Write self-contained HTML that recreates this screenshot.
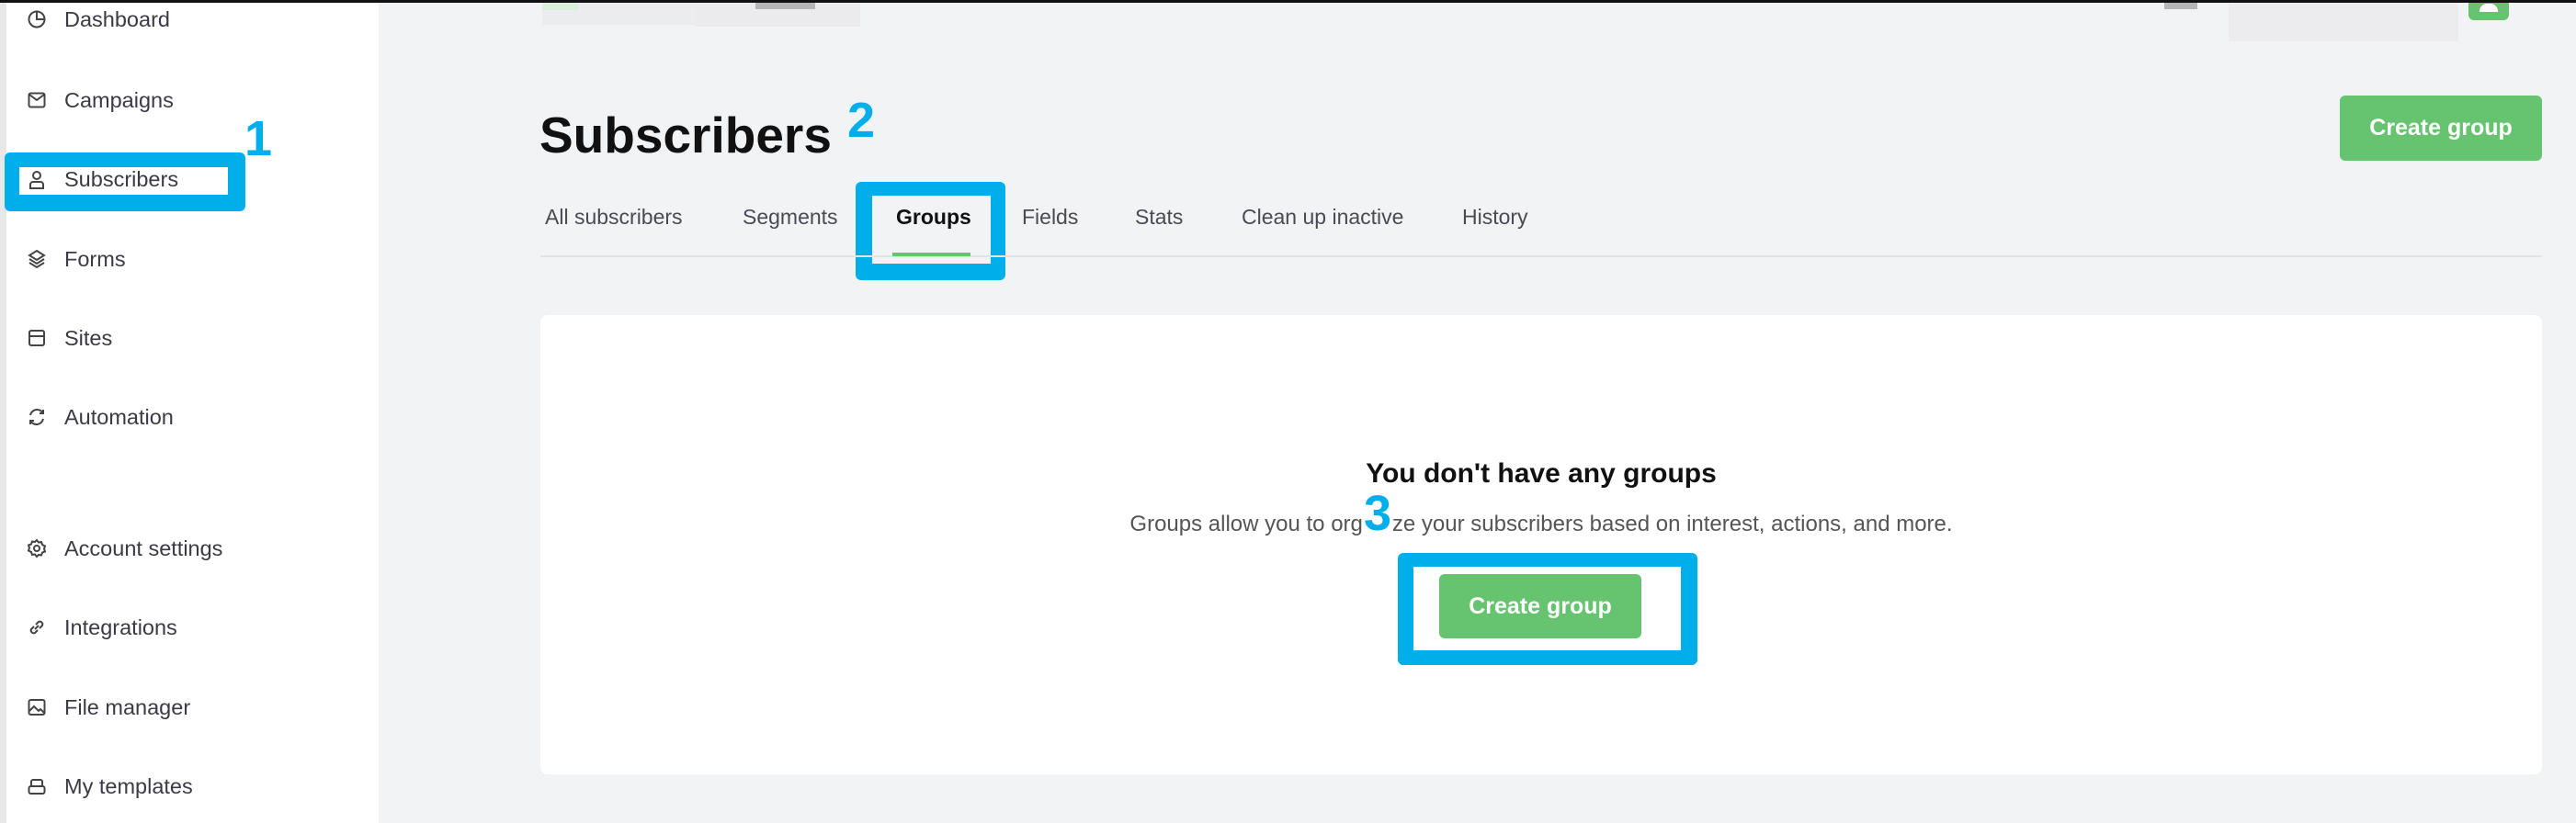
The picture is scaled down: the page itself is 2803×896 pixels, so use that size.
<!DOCTYPE html>
<html><head><meta charset="utf-8"><style>
*{margin:0;padding:0;box-sizing:border-box}
body{width:2803px;height:896px;overflow:hidden;background:#f2f3f5;font-family:"Liberation Sans",sans-serif;position:relative}
.abs{position:absolute}
.side{left:0;top:0;width:412px;height:896px;background:#fff;border-left:7px solid #e8e8e8}
.item{position:absolute;left:70px;font-size:23.5px;color:#3a3a46;line-height:28px}
.ic{position:absolute;left:29px;width:22px;height:22px}
.tab{position:absolute;top:222px;font-size:23px;color:#4a4a55;line-height:28px}
.btn{background:#66c36f;color:#fff;border-radius:6px;font-size:25px;font-weight:bold;display:flex;align-items:center;justify-content:center}
.blue{background:#00aeea;border-radius:6px}
.num{color:#00aeea;font-weight:bold;font-size:54px;line-height:54px}
</style></head><body>
<div class="abs" style="left:0;top:0;width:2803px;height:3px;background:#111;z-index:5"></div>
<div class="abs side"></div>
<div class="abs" style="left:590px;top:3px;width:170px;height:24px;background:#ececee"></div>
<div class="abs" style="left:590px;top:3px;width:40px;height:8px;background:#dcefdc"></div>
<div class="abs" style="left:756px;top:3px;width:180px;height:26px;background:#ebebed"></div>
<div class="abs" style="left:822px;top:3px;width:65px;height:7px;background:#b5b5b8"></div>
<div class="abs" style="left:2355px;top:3px;width:36px;height:7px;background:#b5b5b8"></div>
<div class="abs" style="left:2425px;top:3px;width:250px;height:42px;background:#ececef"></div>
<div class="abs" style="left:2686px;top:0;width:44px;height:22px;background:#66c36f;border-radius:0 0 6px 6px"></div>
<div class="abs" style="left:2698px;top:4px;width:20px;height:9px;background:#fff;border-radius:8px 8px 0 0"></div>

<div class="abs blue" style="left:5px;top:166px;width:262px;height:64px"></div>
<div class="abs" style="left:21px;top:182px;width:227px;height:30px;background:#fff"></div>
<div class="abs num" style="left:266px;top:124px">1</div>

<svg class="ic" style="top:10px" viewBox="0 0 22 22" fill="none" stroke="#444" stroke-width="2"><circle cx="11" cy="11" r="8.5"/><path d="M11 2.5V11H19.5"/></svg>
<div class="item" style="top:7px">Dashboard</div>
<svg class="ic" style="top:98px" viewBox="0 0 22 22" fill="none" stroke="#444" stroke-width="2"><rect x="2.5" y="3.5" width="17" height="15" rx="2"/><path d="M3 5l8 6 8-6"/></svg>
<div class="item" style="top:95px">Campaigns</div>
<svg class="ic" style="top:185px" viewBox="0 0 22 22" fill="none" stroke="#444" stroke-width="2"><circle cx="11" cy="6" r="4"/><path d="M4 20v-4a3 3 0 0 1 3-3h8a3 3 0 0 1 3 3v4z"/></svg>
<div class="item" style="top:181px">Subscribers</div>
<svg class="ic" style="top:271px" viewBox="0 0 22 22" fill="none" stroke="#444" stroke-width="2"><path d="M11 2l8 5-8 5-8-5z M3 11l8 5 8-5 M3 15l8 5 8-5"/></svg>
<div class="item" style="top:268px">Forms</div>
<svg class="ic" style="top:357px" viewBox="0 0 22 22" fill="none" stroke="#444" stroke-width="2"><rect x="3" y="3" width="16" height="16" rx="2"/><path d="M3 9h16"/></svg>
<div class="item" style="top:354px">Sites</div>
<svg class="ic" style="top:443px" viewBox="0 0 22 22" fill="none" stroke="#444" stroke-width="2"><path d="M4 9a7.5 7.5 0 0 1 14-2M18 3v4h-4M18 13a7.5 7.5 0 0 1-14 2M4 19v-4h4"/></svg>
<div class="item" style="top:440px">Automation</div>
<svg class="ic" style="top:586px" viewBox="0 0 22 22" fill="none" stroke="#444" stroke-width="2"><circle cx="11" cy="11" r="3"/><path d="M11 2l2 2.5 3-.5 1 3 3 1.5-1 3 1 3-3 1-1 3-3-.5L11 20l-2-2.5-3 .5-1-3-3-1.5 1-3-1-3 3-1 1-3 3 .5z"/></svg>
<div class="item" style="top:583px">Account settings</div>
<svg class="ic" style="top:672px" viewBox="0 0 22 22" fill="none" stroke="#444" stroke-width="2"><path d="M9 13l4-4M8 10l-3 3a3 3 0 0 0 4 4l3-3M14 12l3-3a3 3 0 0 0-4-4l-3 3"/></svg>
<div class="item" style="top:669px">Integrations</div>
<svg class="ic" style="top:759px" viewBox="0 0 22 22" fill="none" stroke="#444" stroke-width="2"><rect x="2.5" y="3" width="17" height="16" rx="2"/><path d="M3 15l5-5 5 5 2-2 4 4"/></svg>
<div class="item" style="top:756px">File manager</div>
<svg class="ic" style="top:845px" viewBox="0 0 22 22" fill="none" stroke="#444" stroke-width="2"><rect x="2.5" y="11" width="17" height="8" rx="2"/><path d="M5 11V6a2 2 0 0 1 2-2h8a2 2 0 0 1 2 2v5"/></svg>
<div class="item" style="top:842px">My templates</div>

<div class="abs" style="left:587px;top:112px;font-size:55px;font-weight:bold;color:#111;line-height:70px">Subscribers</div>
<div class="abs num" style="left:922px;top:104px">2</div>
<div class="abs btn" style="left:2546px;top:104px;width:220px;height:71px">Create group</div>

<div class="abs blue" style="left:931px;top:198px;width:163px;height:107px"></div>
<div class="abs" style="left:949px;top:213px;width:129px;height:74px;background:#f2f3f5"></div>
<div class="tab" style="left:593px">All subscribers</div>
<div class="tab" style="left:808px">Segments</div>
<div class="tab" style="left:975px;color:#111;font-weight:bold">Groups</div>
<div class="tab" style="left:1112px">Fields</div>
<div class="tab" style="left:1235px">Stats</div>
<div class="tab" style="left:1351px">Clean up inactive</div>
<div class="tab" style="left:1591px">History</div>
<div class="abs" style="left:588px;top:278px;width:2178px;height:2px;background:#e2e3e6"></div>
<div class="abs" style="left:971px;top:275px;width:85px;height:4px;background:#66c36f"></div>

<div class="abs" style="left:588px;top:343px;width:2178px;height:500px;background:#fff;border-radius:8px"></div>
<div class="abs" style="left:588px;top:497px;width:2178px;text-align:center;font-size:30px;font-weight:bold;color:#111;line-height:38px">You don't have any groups</div>
<div class="abs" style="left:588px;top:556px;width:2178px;text-align:center;font-size:24px;color:#555;line-height:30px">Groups allow you to organize your subscribers based on interest, actions, and more.</div>
<div class="abs num" style="left:1482px;top:532px;background:#fff;padding:0 2px">3</div>
<div class="abs blue" style="left:1521px;top:602px;width:326px;height:122px"></div>
<div class="abs" style="left:1538px;top:617px;width:291px;height:91px;background:#fff"></div>
<div class="abs btn" style="left:1566px;top:625px;width:220px;height:70px">Create group</div>
</body></html>
